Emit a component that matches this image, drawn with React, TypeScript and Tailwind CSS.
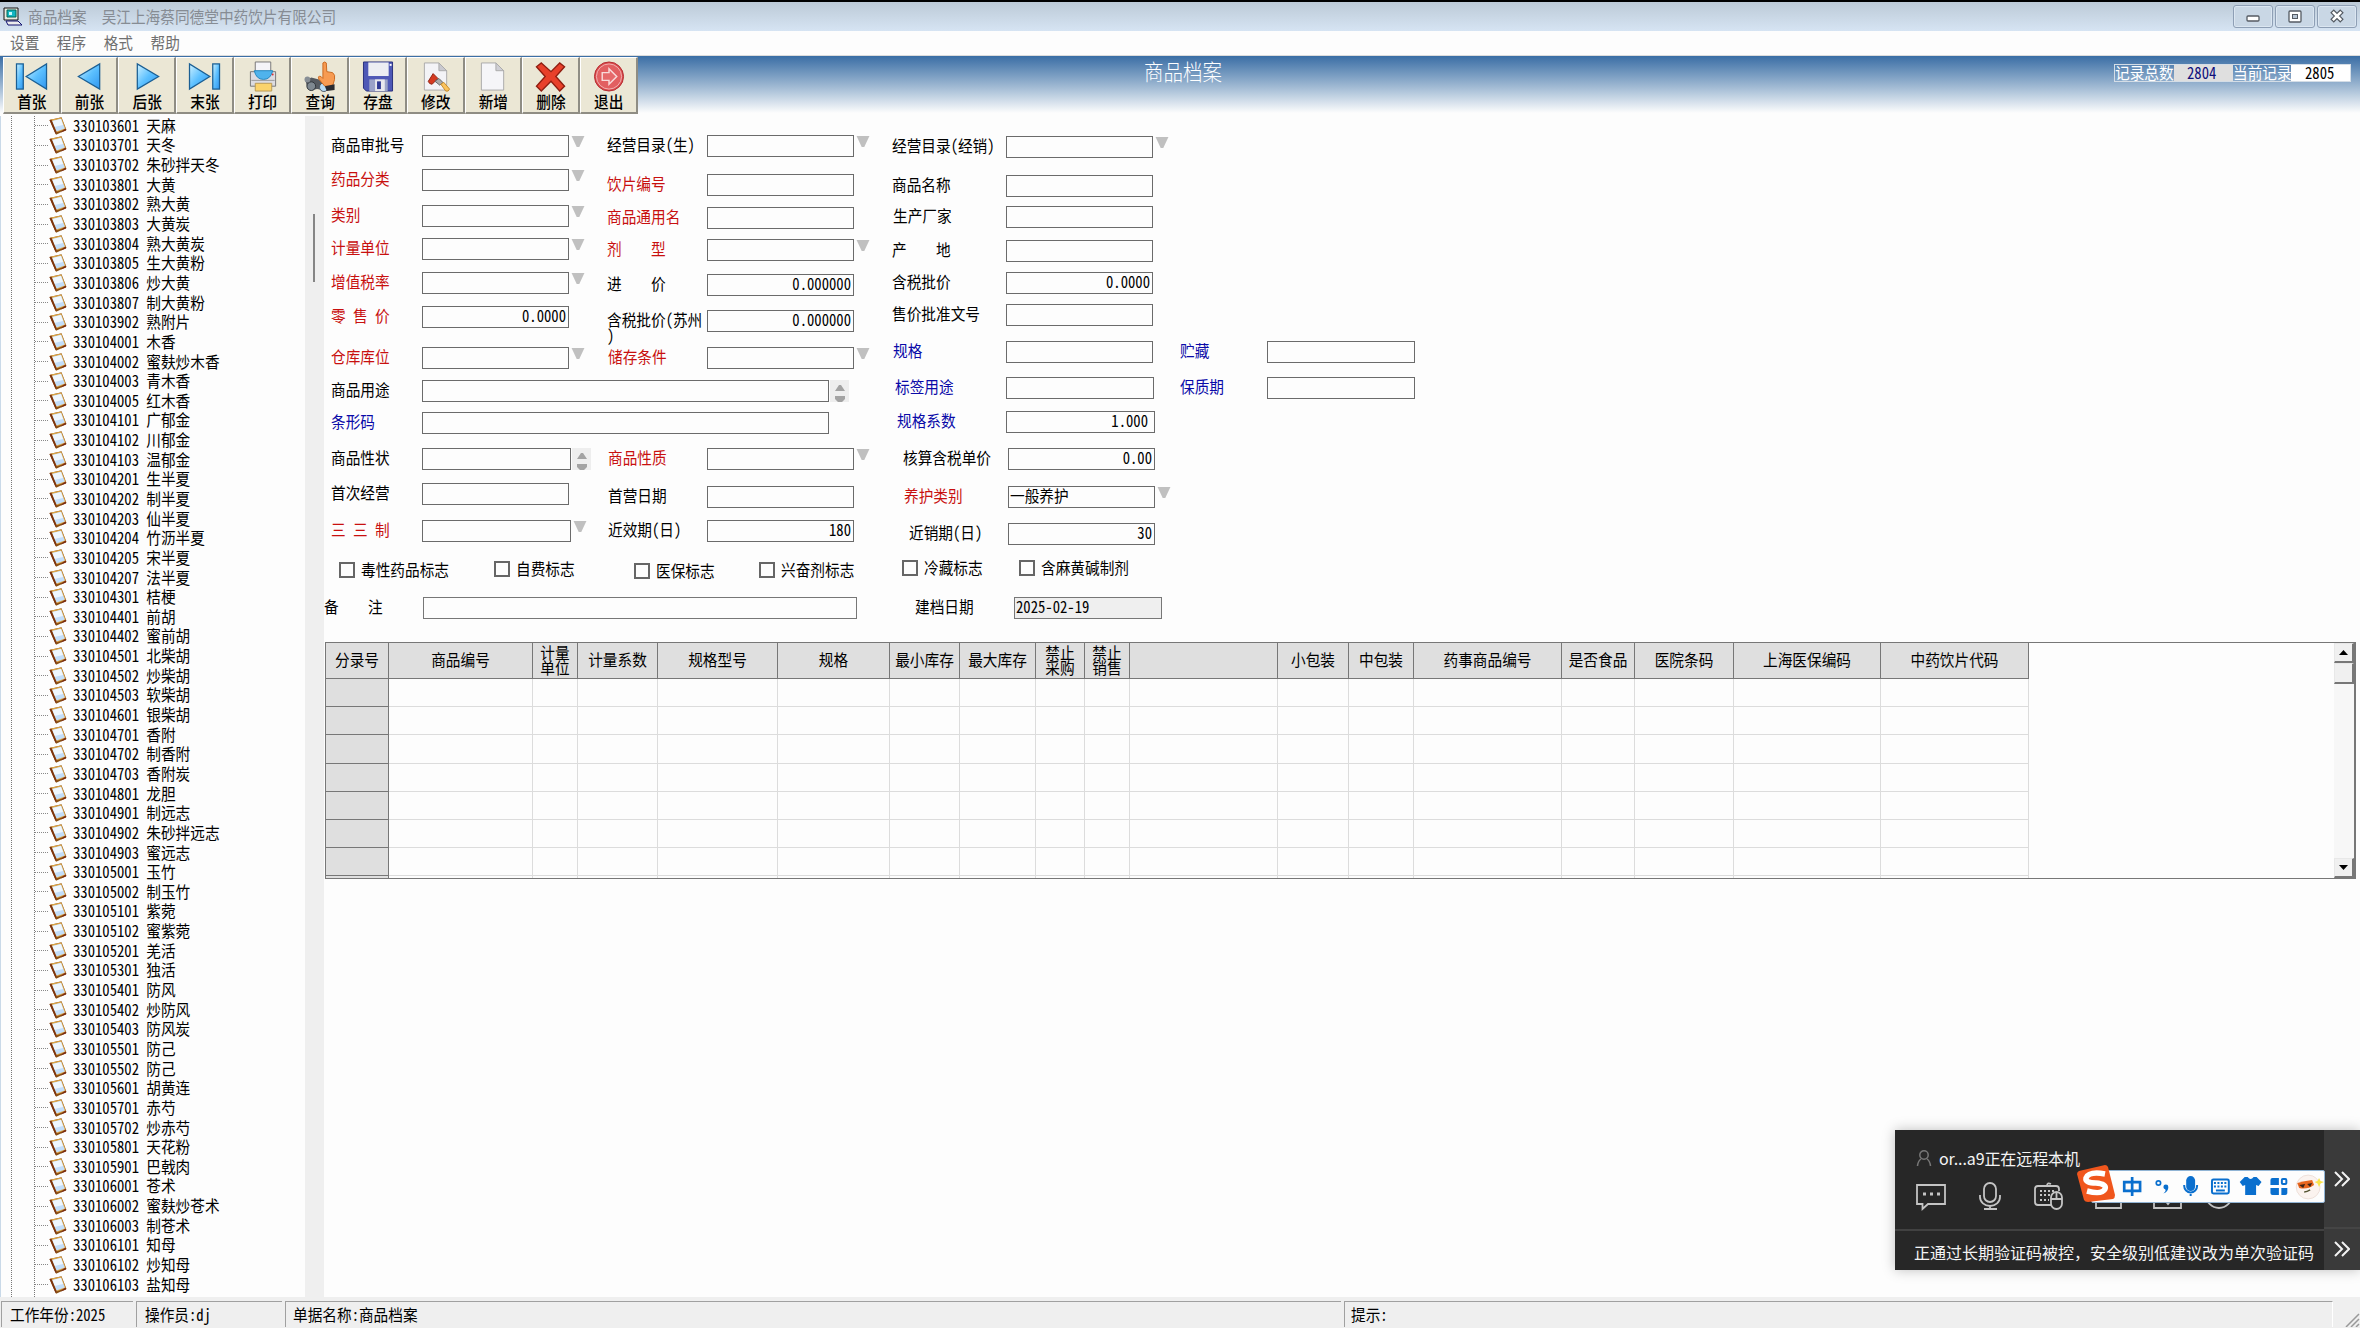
import type { ReactNode } from 'react';

const tree = `330103601 天麻
330103701 天冬
330103702 朱砂拌天冬
330103801 大黄
330103802 熟大黄
330103803 大黄炭
330103804 熟大黄炭
330103805 生大黄粉
330103806 炒大黄
330103807 制大黄粉
330103902 熟附片
330104001 木香
330104002 蜜麸炒木香
330104003 青木香
330104005 红木香
330104101 广郁金
330104102 川郁金
330104103 温郁金
330104201 生半夏
330104202 制半夏
330104203 仙半夏
330104204 竹沥半夏
330104205 宋半夏
330104207 法半夏
330104301 桔梗
330104401 前胡
330104402 蜜前胡
330104501 北柴胡
330104502 炒柴胡
330104503 软柴胡
330104601 银柴胡
330104701 香附
330104702 制香附
330104703 香附炭
330104801 龙胆
330104901 制远志
330104902 朱砂拌远志
330104903 蜜远志
330105001 玉竹
330105002 制玉竹
330105101 紫菀
330105102 蜜紫菀
330105201 羌活
330105301 独活
330105401 防风
330105402 炒防风
330105403 防风炭
330105501 防己
330105502 防己
330105601 胡黄连
330105701 赤芍
330105702 炒赤芍
330105801 天花粉
330105901 巴戟肉
330106001 苍术
330106002 蜜麸炒苍术
330106003 制苍术
330106101 知母
330106102 炒知母
330106103 盐知母`.split('\n');

function T({ children, className = '', leading = 'leading-[20px]' }: { children: ReactNode; className?: string; leading?: string }) {
  return (
    <span className={`inline-block -translate-y-px scale-y-[1.12] whitespace-pre text-[14.67px] ${leading} ${className}`}>{children}</span>
  );
}

type Color = 'black' | 'red' | 'blue';
const colors: Record<Color, string> = { black: 'text-black', red: 'text-[#c8100f]', blue: 'text-[#0a0aa8]' };

type FieldProps = {
  label: string;
  color?: Color;
  row: string;
  labelBox: string;
  box?: string;
  value?: string;
  valueClass?: string;
  extra?: 'drop' | 'spin';
  wrap?: string;
};

function Drop() {
  return (
    <svg className="ml-[2px] mt-px h-[11px] w-[14px] shrink-0" viewBox="0 0 14 12">
      <path d="M0 0H14L8.4 12H5.6Z" fill="#c0c0c0" />
    </svg>
  );
}

function Spin() {
  return (
    <svg className="ml-px h-[22px] w-[19px] shrink-0 bg-[#eeeeee]" viewBox="0 0 19 22">
      <path d="M5 11L9 5H11L15 11ZM5 16H15V19L12 22H8L5 19Z" fill="#a3a3a3" />
    </svg>
  );
}

function Field({ label, color = 'black', row, labelBox, box = 'w-[147px]', value, valueClass = 'justify-end pr-[2px]', extra, wrap }: FieldProps) {
  return (
    <div className={`flex items-start ${row}`}>
      <div className={`flex h-[22px] shrink-0 flex-col ${labelBox} ${colors[color]}`}>
        <T>{label}</T>
        {wrap && <T className="-mt-[1px]" leading="leading-[14px]">{wrap}</T>}
      </div>
      <div className={`flex h-[22px] shrink-0 items-center border border-[#6b6b6b] bg-[#fdfdfd] ${box} ${valueClass}`}>
        {value && <T className="-mt-[2px]">{value}</T>}
      </div>
      {extra === 'drop' && <Drop />}
      {extra === 'spin' && <Spin />}
    </div>
  );
}

const colA: FieldProps[] = [
  { label: '商品审批号', row: 'h-[34px]', labelBox: 'w-[91px]', extra: 'drop' },
  { label: '药品分类', color: 'red', row: 'h-[36px]', labelBox: 'w-[91px]', extra: 'drop' },
  { label: '类别', color: 'red', row: 'h-[33px]', labelBox: 'w-[91px]', extra: 'drop' },
  { label: '计量单位', color: 'red', row: 'h-[34px]', labelBox: 'w-[91px]', extra: 'drop' },
  { label: '增值税率', color: 'red', row: 'h-[34px]', labelBox: 'w-[91px]', extra: 'drop' },
  { label: '零 售 价', color: 'red', row: 'h-[41px]', labelBox: 'w-[91px]', value: '0.0000' },
  { label: '仓库库位', color: 'red', row: 'h-[33px]', labelBox: 'w-[91px]', extra: 'drop' },
  { label: '商品用途', row: 'h-[32px]', labelBox: 'w-[91px]', box: 'w-[407px]', extra: 'spin' },
  { label: '条形码', color: 'blue', row: 'h-[36px]', labelBox: 'w-[91px]', box: 'w-[407px]' },
  { label: '商品性状', row: 'h-[35px]', labelBox: 'w-[91px]', box: 'w-[149px]', extra: 'spin' },
  { label: '首次经营', row: 'h-[37px]', labelBox: 'w-[91px]' },
  { label: '三 三 制', color: 'red', row: 'h-[22px]', labelBox: 'w-[91px]', box: 'w-[149px]', extra: 'drop' },
];

const colB: FieldProps[] = [
  { label: '经营目录(生)', row: 'h-[39px]', labelBox: 'w-[100px]', extra: 'drop' },
  { label: '饮片编号', color: 'red', row: 'h-[33px]', labelBox: 'w-[100px]' },
  { label: '商品通用名', color: 'red', row: 'h-[32px]', labelBox: 'w-[100px]' },
  { label: '剂    型', color: 'red', row: 'h-[35px]', labelBox: 'w-[100px]', extra: 'drop' },
  { label: '进    价', row: 'h-[36px]', labelBox: 'w-[100px]', value: '0.000000' },
  { label: '含税批价(苏州', row: 'h-[37px]', labelBox: 'w-[100px]', value: '0.000000', wrap: ')' },
  { label: '储存条件', color: 'red', row: 'h-[101px]', labelBox: 'w-[100px] pl-px', extra: 'drop' },
  { label: '商品性质', color: 'red', row: 'h-[38px]', labelBox: 'w-[100px] pl-px', extra: 'drop' },
  { label: '首营日期', row: 'h-[34px]', labelBox: 'w-[100px] pl-px' },
  { label: '近效期(日)', row: 'h-[22px]', labelBox: 'w-[100px] pl-px', value: '180' },
];

const colC: FieldProps[] = [
  { label: '经营目录(经销)', row: 'h-[39px]', labelBox: 'w-[114px]', extra: 'drop' },
  { label: '商品名称', row: 'h-[31px]', labelBox: 'w-[114px]' },
  { label: '生产厂家', row: 'h-[34px]', labelBox: 'w-[114px] pl-px' },
  { label: '产    地', row: 'h-[32px]', labelBox: 'w-[114px]' },
  { label: '含税批价', row: 'h-[32px]', labelBox: 'w-[114px]', value: '0.0000' },
  { label: '售价批准文号', row: 'h-[37px]', labelBox: 'w-[114px]' },
  { label: '规格', color: 'blue', row: 'h-[36px]', labelBox: 'w-[114px] pl-px' },
  { label: '标签用途', color: 'blue', row: 'h-[34px]', labelBox: 'w-[114px] pl-[3px]', box: 'w-[148px]' },
  { label: '规格系数', color: 'blue', row: 'h-[37px]', labelBox: 'w-[114px] pl-[5px]', box: 'w-[149px]', value: '1.000', valueClass: 'justify-end pr-[6px]' },
  { label: '核算含税单价', row: 'h-[38px]', labelBox: 'w-[116px] pl-[11px]', value: '0.00' },
  { label: '养护类别', color: 'red', row: 'h-[37px]', labelBox: 'w-[116px] pl-3', value: '一般养护', valueClass: 'pl-px', extra: 'drop' },
  { label: '近销期(日)', row: 'h-[22px]', labelBox: 'w-[116px] pl-[17px]', value: '30' },
];

const checks = [
  { label: '毒性药品标志', pad: 'pt-[6px]' },
  { label: '自费标志', pad: 'pt-[5px]' },
  { label: '医保标志', pad: 'pt-[7px]' },
  { label: '兴奋剂标志', pad: 'pt-[6px]' },
  { label: '冷藏标志', pad: 'pt-[4px]' },
  { label: '含麻黄碱制剂', pad: 'pt-[4px]' },
];

const headers = ['分录号', '商品编号', '计量\n单位', '计量系数', '规格型号', '规格', '最小库存', '最大库存', '禁止\n采购', '禁止\n销售', '', '小包装', '中包装', '药事商品编号', '是否食品', '医院条码', '上海医保编码', '中药饮片代码'];
const gridCols =
  'grid grid-cols-[63px_144px_45px_80px_120px_112px_70px_76px_49px_45px_148px_71px_65px_148px_73px_99px_147px_148px]';

function BookIcon() {
  return (
    <svg className="h-[18px] w-[18px] shrink-0" viewBox="0 0 18 18">
      <path d="M.5 3L12.5 .3L17.5 13L7 17.8Z" fill="#8a4f12" />
      <path d="M1 2.800L12.300 .6L17 12L6.800 15.800Z" fill="#dba54a" />
      <path d="M3 4L12 1.800L15.800 11.500L7.500 14.500Z" fill="#c3defa" />
      <path d="M3.500 4L12 2L14 8L5.500 10Z" fill="#eff7fe" />
      <path d="M.5 3L2.500 2.800L7.800 15.500L6.500 17Z" fill="#7c3410" />
      <path d="M14.500 12.800L17 11.500L17 13.400L12 15.500Z" fill="#7c2c10" />
    </svg>
  );
}

const arrow = { fill: 'url(#sky)', stroke: '#1b5f94', strokeWidth: 1.3 };
const toolbar: { name: string; icon: ReactNode }[] = [
  { name: '首张', icon: <g {...arrow}><rect x="1" y="3" width="7" height="26" /><path d="M32 3V29L11 16Z" /></g> },
  { name: '前张', icon: <path {...arrow} d="M27 3V29L5 16Z" /> },
  { name: '后张', icon: <path {...arrow} d="M7 3V29L29 16Z" /> },
  { name: '末张', icon: <g {...arrow}><path d="M1 3V29L22 16Z" /><rect x="25" y="3" width="7" height="26" /></g> },
  {
    name: '打印',
    icon: (
      <g strokeWidth="1">
        <path d="M9 1H25V13H9Z" fill="#f4f4f8" stroke="#777" />
        <path d="M4 11H30V26H4Z" fill="#dcdce2" stroke="#777" />
        <path d="M8 10H27Q25 19 17.500 19Q10 19 8 10Z" fill="#4fb3ec" stroke="#2385bd" />
        <path d="M5 20H29" stroke="#999" />
        <path d="M9 23H26V31H9Z" fill="#fbd36c" stroke="#b99a55" />
        <circle cx="27" cy="14" r="1" fill="#d33" />
      </g>
    ),
  },
  {
    name: '查询',
    icon: (
      <g>
        <path d="M2 20L8 17L16 19L24 22V28L20 30L14 29L9 30L4 28Z" fill="#555a60" />
        <circle cx="8" cy="26" r="4.500" fill="#7e8890" stroke="#30353a" />
        <circle cx="21" cy="27" r="4.500" fill="#b8dcf5" stroke="#4a5660" />
        <circle cx="4" cy="19" r="3" fill="#888f96" />
        <path d="M20 2Q22 0 23.500 2L24 11L30 12Q33 14 32 19L30 26H22L16 19Q14 15 18 16L20 18Z" fill="#f79b52" stroke="#c9681f" />
        <path d="M22 26L32 24V30L24 31Z" fill="#2b2b30" />
      </g>
    ),
  },
  {
    name: '存盘',
    icon: (
      <g>
        <path d="M2 1H32V31H5L2 28Z" fill="#4e58b6" stroke="#282f7c" />
        <rect x="7" y="1.500" width="21" height="14" fill="#eceef3" />
        <rect x="29" y="3" width="2" height="2" fill="#fff" />
        <rect x="8" y="19" width="19" height="12" fill="#9aa2c8" />
        <rect x="14" y="19" width="10" height="12" fill="#e8e8ee" />
        <rect x="16" y="21" width="4" height="8" fill="#303a94" />
      </g>
    ),
  },
  {
    name: '修改',
    icon: (
      <g>
        <path d="M5 2H20L28 10V30H5Z" fill="#f3f3f6" stroke="#aaa" />
        <path d="M20 2V10H28Z" fill="#c9c9cf" stroke="#aaa" />
        <path d="M14 13L19 18L13 24Q10 24 9 21Z" fill="#d53a20" stroke="#8e2615" />
        <path d="M16 21L20 18L24 22L21 25Z" fill="#aaa" stroke="#666" />
        <path d="M22 24L25 22L31 29Q30 32 27 31Z" fill="#fbc35c" stroke="#c48a2c" />
      </g>
    ),
  },
  {
    name: '新增',
    icon: (
      <g>
        <path d="M5 2H20L28 10V30H5Z" fill="#f5f5f8" stroke="#aaa" />
        <path d="M20 2V10H28Z" fill="#cfcfd5" stroke="#aaa" />
      </g>
    ),
  },
  {
    name: '删除',
    icon: <path d="M7 2L17 11L26 2L31 6L22 16L31 26L26 31L17 21L7 31L2 26L11 16L2 6Z" fill="#e8402a" stroke="#8f1d10" strokeWidth="1.4" />,
  },
  {
    name: '退出',
    icon: (
      <g>
        <circle cx="17" cy="16" r="15" fill="#d94a4d" stroke="#b52b30" />
        <circle cx="17" cy="16" r="13" fill="#e25f61" stroke="#f2b4b4" />
        <path d="M10 12H17V8L25 16L17 24V20H10Z" fill="#e6696b" stroke="#f8dada" strokeWidth="1.500" />
      </g>
    ),
  },
];

function WinButton({ children }: { children: ReactNode }) {
  return (
    <div className="flex h-[23px] w-10 items-center justify-center rounded-[3px] border border-[#8e9fb5] bg-[#c9d7e5] shadow-[inset_0_0_0_1px_#dbe6f1]">
      <svg className="-mt-px h-4 w-4" viewBox="0 0 16 16" fill="none">{children}</svg>
    </div>
  );
}

function Chevron() {
  return (
    <svg className="h-4 w-4" viewBox="0 0 16 16" fill="none" stroke="#f2f2f2" strokeWidth="2">
      <path d="M1 1L8 8L1 15M8 1L15 8L8 15" />
    </svg>
  );
}

function ScrollButton({ d }: { d: string }) {
  return (
    <div className="flex h-[20px] w-5 items-center justify-center border-b-2 border-l border-r-2 border-t border-b-[#777] border-l-[#e8e8e8] border-r-[#777] border-t-[#e8e8e8] bg-[#f0f0f0]">
      <svg className="h-[5px] w-[9px]" viewBox="0 0 9 5"><path d={d} fill="#000" /></svg>
    </div>
  );
}

function RemotePanel() {
  return (
    <div className="absolute left-[1895px] top-[1130px] flex h-[140px] w-[465px] bg-[#272727] shadow-[0_0_12px_rgba(0,0,0,0.25)] [font-feature-settings:normal]">
      <div className="flex w-[429px] flex-col text-base text-[#f4f4f4]">
        <div className="h-[101px] border-b-2 border-[#414141] pl-[20px] pt-[16px]">
          <div className="flex h-6 items-center">
            <svg className="mr-[7px] h-4 w-[17px]" viewBox="0 0 17 16" fill="none" stroke="#777" strokeWidth="1.500">
              <circle cx="9" cy="5" r="4.200" />
              <path d="M2.500 16Q3 11 6 9M15.500 16Q15 11 12 9" />
            </svg>
            <span className="whitespace-nowrap tracking-[-0.1px]">or...a9正在远程本机</span>
          </div>
          <svg className="mt-[11px] h-[32px] w-[330px]" viewBox="1 0 330 32" fill="none" stroke="#c4c4c4" strokeWidth="1.800">
            <path d="M3 4H31V23H14L8.500 28V23H3Z" />
            <path d="M9 13H12M16 13H19M23 13H26" strokeWidth="3" />
            <rect x="70" y="2" width="12" height="19" rx="6" />
            <path d="M66 14V16A10 9 0 0 0 86 16V14M76 25V28M70 28H83" />
            <path d="M137 24H124Q121 24 121 21V8Q121 5 124 5H142Q145 5 145 8V10M133 5Q133 1 137 3" />
            <path d="M126 10H141M126 14H137M126 19H135" strokeDasharray="2 2" />
            <rect x="137" y="11" width="11" height="17" rx="5.500" />
            <path d="M137 18H148M142.500 12V18" />
            <path d="M182 12V27H207V12M240 12V27H267V12M250 18L254 23L258 18" />
            <circle cx="305" cy="14" r="13" />
          </svg>
        </div>
        <div className="flex flex-1 items-center whitespace-nowrap pl-[19px] pt-[2px]">正通过长期验证码被控，安全级别低建议改为单次验证码</div>
      </div>
      <div className="flex flex-1 flex-col items-center bg-[#3a3a3a]">
        <div className="flex h-[101px] w-full items-center justify-center border-b-2 border-[#454545] pt-px"><Chevron /></div>
        <div className="flex h-[42px] items-center"><Chevron /></div>
      </div>
      <div className="absolute left-[196px] top-[40px] flex h-[33px] w-[234px] items-center rounded-[2px] border border-[#91b4d4] bg-[#fdfdfd]">
        <svg className="h-[33px] w-full" viewBox="-1 0 234 33" fill="none" stroke="#0a6fce" strokeWidth="3">
          <path d="M31.500 12H47.500V21H31.500ZM39.500 7V26" strokeWidth="2.700" />
          <circle cx="66" cy="13" r="2.200" strokeWidth="1.700" />
          <path d="M71 17A2.500 2.500 0 1 1 76 17Q76 22 71 23.500Q74 21 73 19.500Q71 19 71 17Z" fill="#0a6fce" stroke="none" />
          <rect x="94" y="6" width="9" height="15" rx="4.500" fill="#0a6fce" stroke="none" />
          <path d="M92 15V16A6.500 6.500 0 0 0 105 16V15M98.500 24V26" strokeWidth="2" />
          <rect x="120" y="9.500" width="17" height="14" rx="1.500" strokeWidth="2" />
          <path d="M122 13H136M122 16.500H136" strokeDasharray="2 1.500" strokeWidth="2" />
          <path d="M124 20.500H133" strokeWidth="2" />
          <path d="M153 7H156Q159 11 162 7H165L170 12L167 16L164.500 15V25H153.500V15L151 16L148 12Z" fill="#0a6fce" stroke="none" />
          <path d="M181 8H187.500V15H179V10Q179 8 181 8ZM179 18H187.500V25H181Q179 25 179 23ZM190 18H196V23Q196 25 194 25H190Z" fill="#0a6fce" stroke="none" />
          <rect x="190.500" y="9" width="4.500" height="5" rx="1" strokeWidth="2" />
          <circle cx="217" cy="17" r="12" fill="#fbf3ef" stroke="#eee0da" strokeWidth="1" />
          <path d="M206 13Q213 11 221 10L223 15Q216 20 208 18Z" fill="#e8661f" stroke="none" />
          <path d="M208 15L214 14L212 18ZM216 14L221 13L219 17Z" fill="#3b2418" stroke="none" />
          <path d="M213 22Q216 22 219 20" stroke="#553" strokeWidth="1.500" />
          <path d="M228 8L229.500 11L233 12L229.500 13.500L228 17L226.500 13.500L223.500 12L226.500 11Z" fill="#f9e34a" stroke="none" />
        </svg>
      </div>
      <svg className="absolute left-[181px] top-[34px] h-[40px] w-[42px]" viewBox="0 0 42 40">
        <path d="M3 7L29 1Q31 1 32 3L39 31Q39 34 37 35L12 38Q9 38 8 36L1 10Q1 8 3 7Z" fill="#f0561d" />
        <path d="M29 10Q13 7 10 14Q9 19 20 19Q31 20 29 25Q26 31 11 27" fill="none" stroke="#fff" strokeWidth="5.500" />
      </svg>
    </div>
  );
}

export default function App() {
  return (
    <div className="relative flex h-[1328px] w-[2360px] flex-col overflow-hidden bg-[#fdfdfd] font-['Noto_Sans_CJK_SC',sans-serif] text-black [font-feature-settings:'hwid']">
      <svg className="absolute h-0 w-0">
        <defs>
          <linearGradient id="sky" x1="0" y1="0" x2="1" y2="1">
            <stop offset="0" stopColor="#d0f2ff" />
            <stop offset=".5" stopColor="#5cc0ff" />
            <stop offset="1" stopColor="#2f96f0" />
          </linearGradient>
        </defs>
      </svg>

      <header className="shrink-0">
        <div className="flex h-[31px] items-center justify-between border-t-2 border-black bg-gradient-to-b from-[#bccad7] to-[#d6e4f3] pl-[3px] pr-[3px]">
          <div className="flex items-center">
            <svg className="mr-[5px] h-5 w-5" viewBox="0 0 20 20">
              <path d="M1 1H15V13H1Z" fill="#e8e8e0" stroke="#111" />
              <path d="M4 3H13V10H4Z" fill="#12b5c2" stroke="#065" />
              <path d="M6 5H9V8H6Z" fill="#c5fbff" />
              <path d="M3 14H15L19 18H5Z" fill="#ececec" stroke="#101070" />
            </svg>
            <T className="text-[#868c94]">商品档案</T>
            <T className="ml-[15px] text-[#868c94]">吴江上海蔡同德堂中药饮片有限公司</T>
          </div>
          <div className="flex gap-[2px]">
            <WinButton><rect x="2" y="8" width="12" height="5" rx="1" fill="#fff" stroke="#555b63" strokeWidth="1.300" /></WinButton>
            <WinButton>
              <rect x="2" y="3" width="12" height="11" rx="1" fill="#fff" stroke="#555b63" strokeWidth="1.300" />
              <rect x="5.500" y="6.500" width="5" height="4" fill="#b9c6d4" stroke="#555b63" />
            </WinButton>
            <WinButton>
              <path d="M3 3L13 13M13 3L3 13" stroke="#555b63" strokeWidth="5" />
              <path d="M3.800 3.800L12.200 12.200M12.200 3.800L3.800 12.200" stroke="#fff" strokeWidth="2.600" />
            </WinButton>
          </div>
        </div>
        <nav className="flex h-[25px] items-center gap-[17.500px] border-b border-[#dcdcdc] pl-[10px] text-[#707070]">
          {['设置', '程序', '格式', '帮助'].map((m) => <T key={m}>{m}</T>)}
        </nav>
        <div className="relative flex h-[60px] bg-gradient-to-b from-[#3a6ea5] via-[#93b0cd] via-45% to-[#fdfdfd] to-95% pl-[3px] pt-px">
          {toolbar.map((b) => (
            <div key={b.name} className="flex h-[57px] w-[57.7px] flex-col items-center border-b-2 border-l border-r-2 border-t border-b-[#8f8d84] border-l-white border-r-[#8f8d84] border-t-white bg-[#ebe7d5] pl-px pt-[3px]">
              <svg className="h-8 w-[34px]" viewBox="0 0 34 32">{b.icon}</svg>
              <T className="font-medium">{b.name}</T>
            </div>
          ))}
          <h1 className="absolute left-[1144px] top-[1px] scale-y-[1.08] text-[19.5px] font-light leading-[28px] text-white">商品档案</h1>
          <div className="absolute left-[2114px] top-[8px] flex h-[18px] w-[237px] items-center border border-[#d4dde6] text-white">
            <T className="w-[59px]">记录总数</T>
            <div className="flex h-full w-[59px] items-center bg-[#dfdfdf] pl-[13px] text-[#10107c]"><T>2804</T></div>
            <T className="w-[58px]">当前记录</T>
            <div className="flex h-full flex-1 items-center bg-white pl-[14px] text-black"><T>2805</T></div>
          </div>
        </div>
      </header>

      <main className="flex h-[1181px] shrink-0 border-l border-[#c9d9e8]">
        <aside className="flex w-[323px] shrink-0 justify-between">
          <div className="ml-[10px] flex border-l border-dotted border-[#777]">
            <div className="ml-[22px] border-l border-dotted border-[#777]">
              {tree.map((item) => (
                <div key={item} className="flex h-[19.655px] items-center">
                  <span className="mr-[1px] w-[13px] border-t border-dotted border-[#888]" />
                  <BookIcon />
                  <T className="ml-[6px]">{item}</T>
                </div>
              ))}
            </div>
          </div>
          <div className="w-[19px] bg-[#efefef] pl-2 pt-[98px]">
            <div className="h-[68px] w-[2px] bg-[#858585]" />
          </div>
        </aside>

        <section className="min-w-0 flex-1">
          <div className="flex h-[440px]">
            <div className="w-[283px] shrink-0 pl-[7px] pt-[19px]">{colA.map((f) => <Field key={f.label} {...f} />)}</div>
            <div className="w-[284px] shrink-0 pt-[19px]">{colB.map((f) => <Field key={f.label} {...f} />)}</div>
            <div className="w-[289px] shrink-0 pl-px pt-[20px]">{colC.map((f) => <Field key={f.label} {...f} />)}</div>
            <div className="pt-[225px]">
              <Field label="贮藏" color="blue" row="h-[36px]" labelBox="w-[87px]" box="w-[148px]" />
              <Field label="保质期" color="blue" row="h-[22px]" labelBox="w-[87px]" box="w-[148px]" />
            </div>
          </div>
          <div className="grid h-[41px] grid-cols-[155px_140px_125px_143px_117px_150px] pl-[15px]">
            {checks.map((c) => (
              <div key={c.label} className={`flex items-start gap-[6px] ${c.pad}`}>
                <div className="h-4 w-4 border-2 border-[#666]" />
                <T className="-mt-[2px]">{c.label}</T>
              </div>
            ))}
          </div>
          <div className="flex h-[45px] items-start">
            <T className="w-[99px]">{'备    注'}</T>
            <div className="h-[22px] w-[434px] border border-[#777]" />
            <T className="ml-[58px] w-[99px]">建档日期</T>
            <div className="flex h-[22px] w-[148px] items-center border border-[#777] bg-[#efefef] pl-px"><T className="-mt-[2px]">2025-02-19</T></div>
          </div>

          <div className="ml-px flex h-[237px] w-[2031px] justify-between overflow-hidden border border-r-2 border-[#777]">
            <div className="w-[1703px] shrink-0 border-r border-[#777]">
              <div className={`${gridCols} h-[36px] border-b border-[#777] bg-[#dfdfdf]`}>
                {headers.map((h, i) => (
                  <div key={i} className="flex flex-col items-center justify-center border-r border-[#777]">
                    {h.split('\n').map((line) => (
                      <T key={line} className="-mt-px" leading={h.includes('\n') ? 'leading-[16px]' : 'leading-[20px]'}>{line}</T>
                    ))}
                  </div>
                ))}
              </div>
              {Array.from({ length: 8 }, (_, r) => (
                <div key={r} className={`${gridCols} h-[28.2px]`}>
                  {headers.map((_, i) => (
                    <div key={i} className={i === 0 ? 'border-b border-r border-[#777] bg-[#dfdfdf]' : 'border-b border-r border-[#dcdcdc]'} />
                  ))}
                </div>
              ))}
            </div>
            <div className="flex w-5 flex-col justify-between bg-[#f7f7f7]">
              <div>
                <ScrollButton d="M4.500 0L9 5H0Z" />
                <div className="h-[21px] border-b-2 border-l border-r-2 border-t border-b-[#777] border-l-[#e8e8e8] border-r-[#777] border-t-[#e8e8e8] bg-[#f0f0f0]" />
              </div>
              <ScrollButton d="M0 0H9L4.500 5Z" />
            </div>
          </div>
        </section>
      </main>

      <footer className="flex flex-1 items-end gap-[3px] bg-[#efefef] pb-px pl-px">
        <div className="flex h-[26px] w-[132px] items-center border-l border-t border-[#a0a0a0] pl-2"><T>工作年份:2025</T></div>
        <div className="flex h-[26px] w-[146px] items-center border-l border-t border-[#a0a0a0] pl-2"><T>操作员:dj</T></div>
        <div className="flex h-[26px] w-[1056px] items-center border-l border-t border-[#a0a0a0] pl-[7px]"><T>单据名称:商品档案</T></div>
        <div className="flex h-[26px] w-[989px] items-center border-l border-r border-t border-[#a0a0a0] border-r-white pl-[6px]"><T>提示:</T></div>
        <svg className="ml-auto h-[14px] w-[15px]" viewBox="0 0 15 14" stroke="#999" strokeWidth="1.500">
          <path d="M1 14L14 1M6 14L14 6M11 14L14 11" />
        </svg>
      </footer>

      <RemotePanel />
    </div>
  );
}
